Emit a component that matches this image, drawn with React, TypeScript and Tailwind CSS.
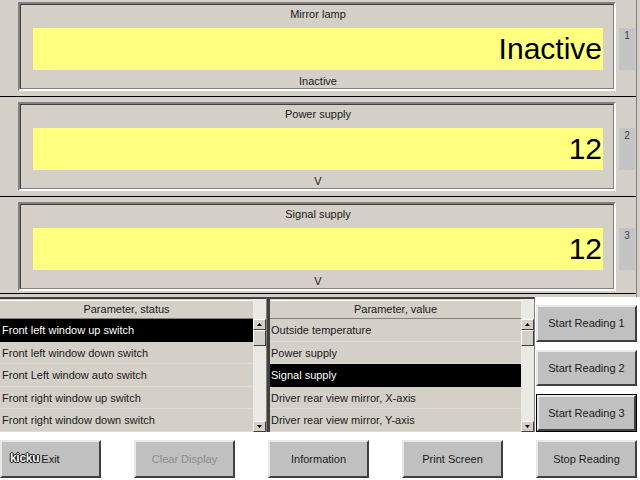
import React from "react";

const panels = [
  { label: "Mirror lamp", value: "Inactive", unit: "Inactive", n: "1", h: "h-[100px]" },
  { label: "Power supply", value: "12", unit: "V", n: "2", h: "h-[100px]" },
  { label: "Signal supply", value: "12", unit: "V", n: "3", h: "h-[97px]" },
];

const statusRows = [
  "Front left window up switch",
  "Front left window down switch",
  "Front Left window auto switch",
  "Front right window up switch",
  "Front right window down switch",
];

const valueRows = [
  "Outside temperature",
  "Power supply",
  "Signal supply",
  "Driver rear view mirror, X-axis",
  "Driver rear view mirror, Y-axis",
];

function Panel({ label, value, unit, n, h }: { label: string; value: string; unit: string; n: string; h: string }) {
  return (
    <div className={`${h} flex flex-col border-r border-[#808080] w-[637px]`}>
      <div className="flex pl-[18px] pt-[2px]">
        {/* sunken frame */}
        <div className="w-[598px] h-[89px] border-2 border-t-[#808080] border-l-[#808080] border-r-white border-b-white">
          <div className="h-full border border-t-[#404040] border-l-[#404040] border-r-[#808080] border-b-[#808080] flex flex-col pl-[12px] pr-[10px]">
            <div className="h-[18px] leading-[18px] text-center text-[11px] text-[#1a1a1a]">{label}</div>
            <div className="mt-[5px] h-[43px] bg-[#ffff80] flex items-center justify-end text-[30px] leading-none pr-[1px]">
              {value}
            </div>
            <div className="mt-[4px] h-[14px] leading-[14px] text-center text-[11px] text-[#1a1a1a]">{unit}</div>
          </div>
        </div>
        <div className="ml-[3px] mt-[26px] w-[16px] h-[42px] bg-[#c4c4c4] text-[10px] text-[#404040] text-center pt-[1px] leading-[14px]">
          {n}
        </div>
      </div>
      <div className="mt-auto h-px bg-black mb-[3px]" />
    </div>
  );
}

function Arrow({ up }: { up?: boolean }) {
  return (
    <div className="h-[11px] bg-[#d4d0c8] border border-t-white border-l-white border-r-[#404040] border-b-[#404040] flex items-center justify-center">
      <svg width="5" height="3" viewBox="0 0 5 3">
        <path d={up ? "M2.5 0 L5 3 L0 3 Z" : "M0 0 L5 0 L2.5 3 Z"} fill="#000" />
      </svg>
    </div>
  );
}

function Scrollbar() {
  return (
    <div className="w-[13px] flex flex-col bg-[#ebe9e4]">
      <Arrow up />
      <div className="h-[16px] bg-[#d4d0c8] border border-t-white border-l-white border-r-[#404040] border-b-[#404040]" />
      <div className="flex-1" />
      <Arrow />
    </div>
  );
}

function List({ title, rows, selected, w, bodyW, left }: { title: string; rows: string[]; selected: number; w: string; bodyW: string; left?: boolean }) {
  return (
    <div className={`${w} h-[135px] flex flex-col border-t-2 border-t-[#404040] ${left ? "" : "border-l-[3px] border-l-[#404040]"} border-r border-r-[#808080]`}>
      <div className="flex">
        <div className={`${bodyW} h-[19px] mt-[1px] border-t border-t-white border-b border-b-[#808080] bg-[#d4d0c8] text-center text-[11px] leading-[17px] text-[#1a1a1a]`}>
          {title}
        </div>
        <div className="flex-1 bg-[#ebe9e4]" />
      </div>
      <div className="flex flex-1 overflow-hidden">
        <div className={`${bodyW} flex flex-col`}>
          {rows.map((r, i) => (
            <div
              key={r}
              className={`h-[22.5px] shrink-0 leading-[22px] ${left ? "pl-[2px]" : "pl-px"} text-[11px] whitespace-nowrap ${
                i === selected ? "bg-black text-white" : "text-[#1a1a1a] border-b border-[#dedbd4]"
              }`}
            >
              {r}
            </div>
          ))}
        </div>
        <Scrollbar />
      </div>
    </div>
  );
}

function Btn({ children, disabled, focus, cls }: { children: React.ReactNode; disabled?: boolean; focus?: boolean; cls?: string }) {
  return (
    <div className={`${cls ?? ""} ${focus ? "border border-black" : ""}`}>
      <div
        className={`h-full bg-[#c0c0c0] border-2 border-t-[#e8e8e8] border-l-[#e8e8e8] border-r-[#404040] border-b-[#404040] flex items-center justify-center text-[11px] ${
          disabled ? "text-[#8c8c8c]" : "text-[#1a1a1a]"
        }`}
      >
        {children}
      </div>
    </div>
  );
}

export default function App() {
  return (
    <div className="w-[640px] h-[480px] bg-white overflow-hidden relative" style={{ fontFamily: '"Liberation Sans", Arial, sans-serif' }}>
      <div className="bg-[#d4d0c8]">
        {panels.map((p) => (
          <Panel key={p.n} {...p} />
        ))}
      </div>

      <div className="flex h-[135px]">
        <div className="flex bg-[#d4d0c8]">
          <List title="Parameter, status" rows={statusRows} selected={0} w="w-[267px]" bodyW="w-[253px]" left />
          <List title="Parameter, value" rows={valueRows} selected={2} w="w-[268px]" bodyW="w-[251px]" />
        </div>
        <div className="flex-1 flex flex-col pl-[1px] pr-[3px] pt-[8px] gap-[8px]">
          <Btn cls="h-[37px]">Start Reading 1</Btn>
          <Btn cls="h-[37px]">Start Reading 2</Btn>
          <Btn cls="h-[38px]" focus>Start Reading 3</Btn>
        </div>
      </div>

      <div className="w-[637px] flex justify-between pt-[8px]">
        <Btn cls="w-[101px] h-[38px]">Exit</Btn>
        <Btn cls="w-[101px] h-[38px]" disabled>Clear Display</Btn>
        <Btn cls="w-[101px] h-[38px]">Information</Btn>
        <Btn cls="w-[101px] h-[38px]">Print Screen</Btn>
        <Btn cls="w-[101px] h-[38px]">Stop Reading</Btn>
      </div>

      {/* watermark */}
      <div
        className="absolute left-[10px] top-[452px] text-[12px] font-bold text-white leading-none tracking-tight"
        style={{ textShadow: "1px 0 0 #000, -1px 0 0 #000, 0 1px 0 #000, 0 -1px 0 #000" }}
      >
        kicku
      </div>
    </div>
  );
}
